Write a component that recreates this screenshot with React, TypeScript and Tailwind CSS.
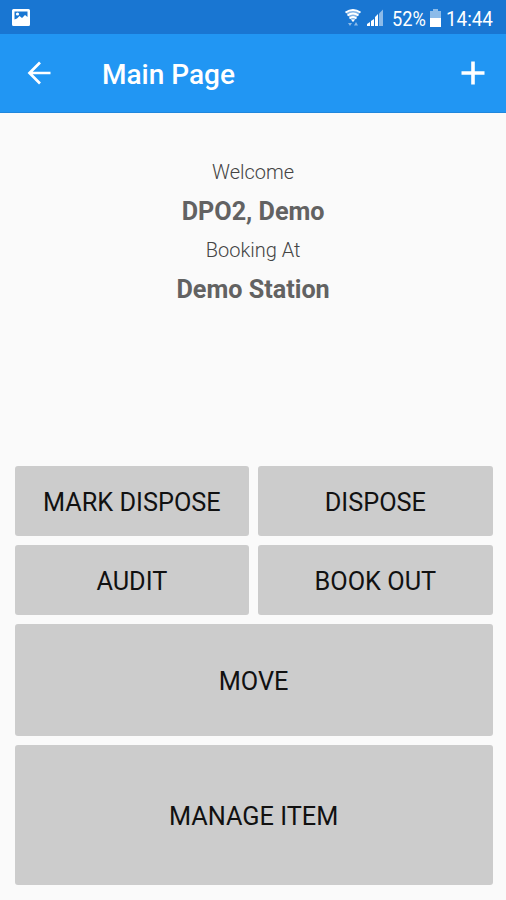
import React from 'react'
import clsx from 'clsx'

interface ActionProps {
  label: string
  className?: string
}

const ActionButton: React.FC<ActionProps> = ({ label, className }) => (
  <button className={clsx('flex items-center justify-center rounded-[3px] bg-[#cccccc] pt-[3px] text-[25.3px] text-[#111111]', className)}>
    {label}
  </button>
)

const StatusBar = () => (
  <div className="flex h-[34px] items-center bg-[#1976d2] pt-px pr-3 pl-3 text-white">
    <svg width="18" height="17" viewBox="0 0 18 17" className="shrink-0">
      <path fillRule="evenodd" d="M1.500 0h15q1.500 0 1.500 1.500v14q0 1.500-1.500 1.500h-15Q0 17 0 15.500v-14Q0 0 1.500 0zM2.500 2.500v8l2.500-1 2.500-2.500 2.500 2 3-3 2.500 2V2.500z" fill="#fff" />
      <circle cx="5.500" cy="5" r="1.600" fill="#fff" />
    </svg>
    <div className="ml-auto flex items-center">
      <svg width="16" height="18" viewBox="0 0 16 18">
        <path d="M.5 3Q8-2 15.500 3L8 13z" fill="#fff" opacity=".45" />
        <g fill="none" stroke="#fff" strokeWidth="1.800">
          <path d="M.5 3.500Q8-1.500 15.500 3.500" />
          <path d="M2.500 6.500Q8 2.500 13.500 6.500" />
          <path d="M4.500 9.500Q8 6.500 11.500 9.500" />
        </g>
        <path d="M6 10.500h4l-2 2.500z" fill="#fff" />
        <path d="M3 14h4l-2 3zM9 16.500l2-3.500 2 3.500z" fill="#fff" opacity=".5" />
      </svg>
      <svg width="18" height="18" viewBox="0 0 18 18" className="ml-[5px]">
        <path d="M1 17v-2l3-2v4zM5 17v-5l3-2v7zM9 17V8l3-3v12z" fill="#fff" />
        <path d="M13 17V4.500L17 .5V17z" fill="#fff" opacity=".5" />
      </svg>
      <span className="mt-[3px] ml-2 w-[35px] origin-left scale-x-[0.89] text-[20.5px] leading-6">52%</span>
      <svg width="11" height="18" viewBox="0 0 11 18" className="ml-[3px]">
        <path d="M3 0h5v2h3v7H0V2h3z" fill="#fff" opacity=".5" />
        <path d="M0 9h11v9H0z" fill="#fff" />
      </svg>
      <span className="mt-[3px] ml-[5px] w-12 origin-left scale-x-[0.92] text-[20.5px] leading-6">14:44</span>
    </div>
  </div>
)

const Header = () => (
  <header className="flex h-[79px] items-center border-b border-[#1f87dd] bg-[#2196f3] text-white">
    <svg width="24" height="24" viewBox="0 0 24 24" className="ml-[27px]" fill="none" stroke="#fff" strokeWidth="2.700">
      <path d="M23.500 12H2.500M13 1.500 2.500 12 13 22.500" />
    </svg>
    <h1 className="mt-[3px] ml-[51px] text-[28px] font-medium">Main Page</h1>
    <svg width="24" height="24" viewBox="0 0 24 24" className="mr-[21px] ml-auto" fill="none" stroke="#fff" strokeWidth="3.600">
      <path d="M12 .5v23M.5 12h23" />
    </svg>
  </header>
)

export default function App() {
  return (
    <div className="flex h-[900px] w-[506px] flex-col bg-[#fafafa] font-[Roboto,sans-serif]">
      <StatusBar />
      <Header />
      <main className="flex flex-1 flex-col pr-[13.4px] pb-[15px] pl-[14.6px]">
        <div className="mr-[1px] pt-[40px] text-center text-[#626262]">
          <p className="text-[20px] leading-[39px] font-light text-[#444444]">Welcome</p>
          <p className="text-[25.2px] leading-[39px] font-bold">DPO2, Demo</p>
          <p className="text-[20px] leading-[39px] font-light text-[#444444]">Booking At</p>
          <p className="text-[25.2px] leading-[39px] font-bold">Demo Station</p>
        </div>
        <div className="mt-auto grid grid-cols-2 gap-[9px]">
          <ActionButton label="MARK DISPOSE" className="h-[70px]" />
          <ActionButton label="DISPOSE" className="h-[70px]" />
          <ActionButton label="AUDIT" className="h-[70px]" />
          <ActionButton label="BOOK OUT" className="h-[70px]" />
          <ActionButton label="MOVE" className="col-span-2 h-[112px]" />
          <ActionButton label="MANAGE ITEM" className="col-span-2 h-[140px]" />
        </div>
      </main>
    </div>
  )
}
